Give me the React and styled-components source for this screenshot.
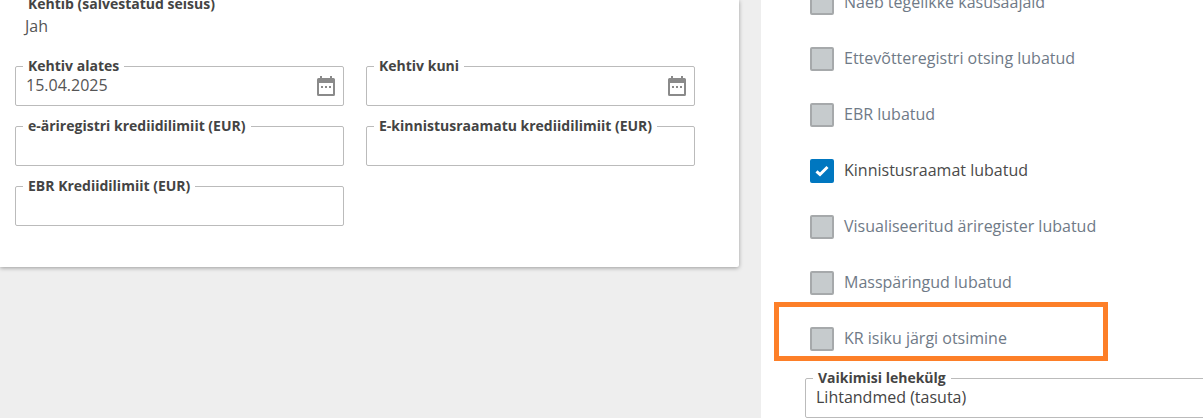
import React from 'react';
import styled, { createGlobalStyle } from 'styled-components';

const GlobalStyle = createGlobalStyle`
  html, body {
    margin: 0;
    height: 418px;
    overflow: hidden;
    background: #eeeeee;
    font-family: "Open Sans", "Liberation Sans", sans-serif;
  }
`;

const Page = styled.div`
  display: flex;
  height: 418px;
  overflow: hidden;
`;

const Card = styled.section`
  width: 739px;
  height: 267px;
  box-sizing: border-box;
  padding: 0 44px 0 15px;
  background: #ffffff;
  box-shadow: 0 1px 4px rgba(0, 0, 0, 0.35);
  border-bottom-right-radius: 2px;
`;

const Status = styled.div`
  height: 61px;
  margin-top: -4px;
  padding-left: 10px;
`;

const StatusLabel = styled.div`
  padding-left: 3px;
  margin-bottom: 3px;
  font-size: 14px;
  line-height: 16px;
  font-weight: 700;
  color: #444444;
`;

const StatusValue = styled.div`
  font-size: 16px;
  line-height: 22px;
  color: #555555;
`;

const FieldGrid = styled.div`
  display: grid;
  grid-template-columns: 329px 329px;
  column-gap: 22px;
  row-gap: 12px;
  margin-top: -3px;
  padding-top: 4px;
`;

const Field = styled.fieldset`
  box-sizing: border-box;
  height: 48px;
  min-width: 0;
  margin: 0;
  padding: 0 8px 0 10px;
  border: 1px solid #bbbbbb;
  border-radius: 2px;
  background: #ffffff;
`;

const SelectField = styled(Field)`
  width: 460px;
  margin-left: -5px;
  margin-top: -13px;
  flex: none;
`;

const Legend = styled.legend`
  margin-left: -3px;
  padding: 0 5px;
  font-size: 14px;
  line-height: 16px;
  font-weight: 700;
  color: #444444;
`;

const FieldBody = styled.div`
  display: flex;
  align-items: center;
  justify-content: space-between;
  height: 30px;
  margin-top: -4px;
`;

const FieldValue = styled.span`
  font-size: 16px;
  line-height: 22px;
  color: ${p => (p.$dark ? '#444444' : '#555555')};
`;

const Panel = styled.aside`
  width: 442px;
  margin-left: 22px;
  height: 418px;
  box-sizing: border-box;
  padding: 0 0 0 49px;
  background: #ffffff;
  overflow: hidden;
`;

const CheckList = styled.div`
  display: flex;
  flex-direction: column;
  gap: 32px;
  margin-top: -9px;
`;

const CheckRow = styled.label`
  position: relative;
  display: flex;
  align-items: center;
  gap: 10px;
  height: 24px;
`;

const Box = styled.span`
  display: flex;
  align-items: center;
  justify-content: center;
  box-sizing: border-box;
  width: 24px;
  height: 24px;
  flex: none;
  border-radius: 2px;
  border: 2px solid ${p => (p.$on ? '#0077c0' : '#a6a9ab')};
  background: ${p => (p.$on ? '#0077c0' : '#c6cbcd')};
`;

const CheckText = styled.span`
  font-size: 16px;
  line-height: 22px;
  color: ${p => (p.$on ? '#4a4a4a' : '#6f7a87')};
  position: relative;
  top: -1px;
`;

const Highlight = styled.div`
  position: absolute;
  left: -36px;
  top: -25px;
  width: 334px;
  height: 59px;
  box-sizing: border-box;
  border: 5px solid #fd7f28;
  pointer-events: none;
`;

const CalendarIcon = styled.svg`
  flex: none;
  margin-top: 2px;
`;

const Calendar = () => (
  <CalendarIcon width="18" height="20" viewBox="0 0 18 20">
    <path
      d="M3 0h2v2h8V0h2v2h1.5A1.5 1.5 0 0 1 18 3.5v15a1.5 1.5 0 0 1-1.5 1.5h-15A1.5 1.5 0 0 1 0 18.5v-15A1.5 1.5 0 0 1 1.500 2H3zM2 7v11h14V7z"
      fill="#8a8a8a"
      fillRule="evenodd"
    />
    <rect x="4" y="10" width="2" height="2" fill="#8a8a8a" />
    <rect x="8" y="10" width="2" height="2" fill="#8a8a8a" />
    <rect x="12" y="10" width="2" height="2" fill="#8a8a8a" />
  </CalendarIcon>
);

const Tick = () => (
  <svg width="14" height="12" viewBox="0 0 14 12">
    <path d="M1.500 6.300 5 9.500l7.500-7.500" fill="none" stroke="#ffffff" strokeWidth="3" />
  </svg>
);

const checks = [
  { text: 'Näeb tegelikke kasusaajaid' },
  { text: 'Ettevõtteregistri otsing lubatud' },
  { text: 'EBR lubatud' },
  { text: 'Kinnistusraamat lubatud', on: true },
  { text: 'Visualiseeritud äriregister lubatud' },
  { text: 'Masspäringud lubatud' },
  { text: 'KR isiku järgi otsimine', marked: true },
];

function DateField({ label, value }) {
  return (
    <Field>
      <Legend>{label}</Legend>
      <FieldBody>
        <FieldValue>{value}</FieldValue>
        <Calendar />
      </FieldBody>
    </Field>
  );
}

function TextField({ label }) {
  return (
    <Field>
      <Legend>{label}</Legend>
      <FieldBody />
    </Field>
  );
}

export default function App() {
  return (
    <Page>
      <GlobalStyle />
      <Card>
        <Status>
          <StatusLabel>Kehtib (salvestatud seisus)</StatusLabel>
          <StatusValue>Jah</StatusValue>
        </Status>
        <FieldGrid>
          <DateField label="Kehtiv alates" value="15.04.2025" />
          <DateField label="Kehtiv kuni" />
          <TextField label="e-äriregistri krediidilimiit (EUR)" />
          <TextField label="E-kinnistusraamatu krediidilimiit (EUR)" />
          <TextField label="EBR Krediidilimiit (EUR)" />
        </FieldGrid>
      </Card>
      <Panel>
        <CheckList>
          {checks.map(c => (
            <CheckRow key={c.text}>
              <Box $on={c.on}>{c.on && <Tick />}</Box>
              <CheckText $on={c.on}>{c.text}</CheckText>
              {c.marked && <Highlight />}
            </CheckRow>
          ))}
          <SelectField>
            <Legend>Vaikimisi lehekülg</Legend>
            <FieldBody>
              <FieldValue $dark>Lihtandmed (tasuta)</FieldValue>
            </FieldBody>
          </SelectField>
        </CheckList>
      </Panel>
    </Page>
  );
}
